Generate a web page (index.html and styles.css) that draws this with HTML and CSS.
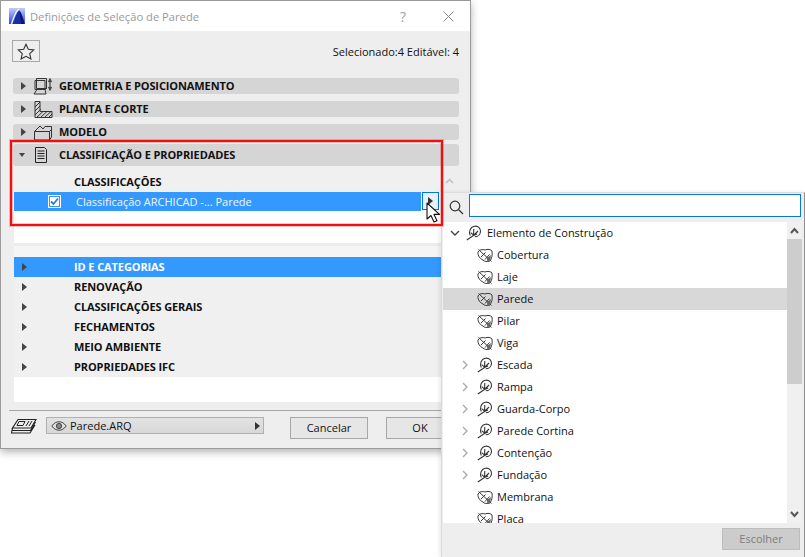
FILE: index.html
```html
<!DOCTYPE html>
<html lang="pt">
<head>
<meta charset="utf-8">
<title>Definições de Seleção de Parede</title>
<link rel="stylesheet" href="styles.css">
</head>
<body>
<svg class="defs" width="0" height="0" aria-hidden="true">
  <defs>
    <linearGradient id="logo-grad" x1="0" y1="0" x2="0" y2="1"><stop offset="0" stop-color="#c4ccf8"/><stop offset="1" stop-color="#2a48e0"/></linearGradient>
    <symbol id="leaf" viewBox="0 0 16 14">
      <path d="M1 4C2 1.500 6 1 8 2c2.500-1.200 6-.5 7 1 .5 4 0 7-2 10-3 1-6 .5-7-1C3.500 11 .5 8 1 4Z" fill="none" stroke="#3a3a3a" stroke-width="1"/>
      <path d="M1.500 1.500 14.500 13.500M4 9 8.500 4.500M8 11.500 12.500 6.500" fill="none" stroke="#3a3a3a" stroke-width="1"/>
      <path d="M10 10l4-3-.8 5.500-3 .7Z" fill="#666"/>
    </symbol>
    <symbol id="branch" viewBox="0 0 16 16">
      <path d="M4.300 10.500C2.500 7 4 2 8.500 1.200c3.800-.4 6.300 2.400 6 5.600-.3 3-2.800 5-5.700 5" fill="none" stroke="#333" stroke-width="1.100"/>
      <path d="M.8 15 7.500 10.500 11 9M7.500 10.500 7.800 4M4.600 7.600l3 2.400M7.500 10.500l4.500-4.500" fill="none" stroke="#333" stroke-width="1.100"/>
    </symbol>
  </defs>
</svg>

<section class="dialog">
  <header class="titlebar">
    <svg class="logo" width="17" height="16" viewBox="0 0 17 16"><rect width="16" height="16" fill="url(#logo-grad)"/><path d="M4 16C6 9 8 4 10 2.500c2 1.500 4 7 5.500 13.500Z" fill="#1a2ea8"/><path d="M12 16C11.500 10 11 6 10 2.500c2 1.500 4 7 5.500 13.500Z" fill="#0b1670"/><path d="M2.500 16C5 8 7 2.500 10 1" fill="none" stroke="#fff" stroke-width="1.200"/></svg>
    <span class="title">Definições de Seleção de Parede</span>
    <span class="help">?</span>
    <svg class="close" width="11" height="11" viewBox="0 0 11 11"><path d="M.5.5l10 10M10.500.5l-10 10" stroke="#8a8a8a" fill="none"/></svg>
  </header>

  <div class="toolbar">
    <button class="star-btn" type="button"><svg width="18" height="17" viewBox="0 0 18 17"><path d="M9 1.200l2.300 5.100 5.500.6-4.100 3.700 1.200 5.400L9 13.300 4.100 16l1.200-5.400L1.200 6.900l5.500-.6Z" fill="none" stroke="#333" stroke-width="1.100"/></svg></button>
    <span class="count">Selecionado:4 Editável: 4</span>
  </div>

  <div class="panels">
    <div class="panel-head">
      <span class="tri-right"></span>
      <svg class="panel-icon" width="28" height="18" viewBox="0 0 28 18"><path d="M3.500 1.500h10v10h-10ZM2 3.500h10v9H2ZM12 12.500l1.500-1M4 12.500l-3 4.500h12l-1-4.500" fill="none" stroke="#333"/><path d="M17 4v7M15.500 5l1.500-3 1.500 3M15.500 10l1.500 3 1.500-3" fill="none" stroke="#333" stroke-width="1.100"/></svg>
      <span class="panel-label">GEOMETRIA E POSICIONAMENTO</span>
    </div>
    <div class="panel-head">
      <span class="tri-right"></span>
      <svg class="panel-icon" width="28" height="18" viewBox="0 0 28 18"><path d="M2 1.500h5v10h12M2 1.500V17.500H19v-6" fill="none" stroke="#333"/><path d="M2 7l5-5M2 11l5-5M2 15l6-6M4 17l6-5.500M8 17l6-5.500M12 17l6-5.500M16 17l3-3" stroke="#333" fill="none"/></svg>
      <span class="panel-label">PLANTA E CORTE</span>
    </div>
    <div class="panel-head">
      <span class="tri-right"></span>
      <svg class="panel-icon" width="28" height="18" viewBox="0 0 28 18"><path d="M1.500 8.500v8.500h15V8.500ZM1.500 8.500 7 3l3 3 2-2.500h6.500V14l-2 3M16.500 8.500l2-2" fill="none" stroke="#333"/></svg>
      <span class="panel-label">MODELO</span>
    </div>
    <div class="panel-head open">
      <span class="tri-down"></span>
      <svg class="panel-icon" width="28" height="18" viewBox="0 0 28 18"><path d="M5.500 1.500h9l2 2v13h-11Z" fill="none" stroke="#222"/><path d="M7.500 5h7M7.500 7.500h7M7.500 10h7M7.500 12.500h7" stroke="#222" fill="none"/></svg>
      <span class="panel-label">CLASSIFICAÇÃO E PROPRIEDADES</span>
    </div>
  </div>

  <div class="content">
    <div class="class-head"><span class="bold-label">CLASSIFICAÇÕES</span><svg class="chev-up" width="9" height="6" viewBox="0 0 9 6"><path d="M1 5l3.500-3.500L8 5" fill="none" stroke="#c8c8c8" stroke-width="1.800"/></svg></div>
    <div class="class-row-wrap">
      <div class="class-row">
        <svg class="check" width="13" height="13" viewBox="0 0 13 13"><rect x=".5" y=".5" width="12" height="12" fill="#fff" stroke="#fff"/><rect x="1.500" y="1.500" width="10" height="10" fill="#fff" stroke="#3399ff"/><path d="M3 6.500l2.500 2.500L10 3.500" fill="none" stroke="#3a78c8" stroke-width="1.800"/></svg>
        <span class="class-text">Classificação ARCHICAD -... Parede</span>
      </div>
      <button class="row-arrow" type="button"><span class="tri-right dark"></span></button>
    </div>
    <div class="white-gap"></div>
    <div class="band"></div>
    <ul class="attr-list">
      <li class="attr selected"><span class="tri-right"></span><span class="bold-label">ID E CATEGORIAS</span></li>
      <li class="attr"><span class="tri-right"></span><span class="bold-label">RENOVAÇÃO</span></li>
      <li class="attr"><span class="tri-right"></span><span class="bold-label">CLASSIFICAÇÕES GERAIS</span></li>
      <li class="attr"><span class="tri-right"></span><span class="bold-label">FECHAMENTOS</span></li>
      <li class="attr"><span class="tri-right"></span><span class="bold-label">MEIO AMBIENTE</span></li>
      <li class="attr"><span class="tri-right"></span><span class="bold-label">PROPRIEDADES IFC</span></li>
    </ul>
    <div class="white-end"></div>
  </div>

  <footer class="footer">
    <svg class="layers" width="26" height="17" viewBox="0 0 26 17"><path d="M7 1.500h18l-5 8.500H1.500Z" fill="none" stroke="#222" stroke-width="1.100"/><path d="M1.500 10l-.5 2.500h18.500l5-8.500M1 12.500l-.5 2.500h18.500l5-8" fill="none" stroke="#222" stroke-width="1.100"/><path d="M8 3.500h6l-2 4H6ZM15 8l3-5M18 8l3-5" fill="none" stroke="#222"/></svg>
    <div class="layer-select">
      <svg class="eye" width="16" height="10" viewBox="0 0 16 10"><path d="M.8 5C3 1.800 5.500.8 8 .8S13 1.800 15.200 5C13 8.200 10.500 9.200 8 9.200S3 8.200.8 5Z" fill="none" stroke="#444"/><circle cx="8" cy="5" r="2.600" fill="#888" stroke="#444"/></svg>
      <span class="layer-name">Parede.ARQ</span>
      <span class="tri-right dark small"></span>
    </div>
    <button class="btn cancel" type="button"><span class="btn-text">Cancelar</span></button>
    <button class="btn ok" type="button"><span class="btn-text">OK</span></button>
  </footer>
</section>

<aside class="popup">
  <div class="search">
    <svg class="lens" width="15" height="15" viewBox="0 0 15 15"><circle cx="6" cy="6" r="4.800" fill="none" stroke="#333" stroke-width="1.200"/><path d="M9.500 9.500l4.500 4.500" stroke="#333" stroke-width="1.300"/></svg>
    <div class="search-box"></div>
  </div>
  <div class="tree-wrap">
    <ul class="tree">
      <li class="node root"><svg class="chev" width="10" height="6" viewBox="0 0 10 6"><path d="M1 1l4 4 4-4" fill="none" stroke="#444" stroke-width="1.400"/></svg><svg class="ic" width="16" height="16"><use href="#branch"/></svg><span>Elemento de Construção</span></li>
      <li class="node leaf"><svg class="ic" width="16" height="14"><use href="#leaf"/></svg><span>Cobertura</span></li>
      <li class="node leaf"><svg class="ic" width="16" height="14"><use href="#leaf"/></svg><span>Laje</span></li>
      <li class="node leaf current"><svg class="ic" width="16" height="14"><use href="#leaf"/></svg><span>Parede</span></li>
      <li class="node leaf"><svg class="ic" width="16" height="14"><use href="#leaf"/></svg><span>Pilar</span></li>
      <li class="node leaf"><svg class="ic" width="16" height="14"><use href="#leaf"/></svg><span>Viga</span></li>
      <li class="node group"><svg class="chev" width="6" height="10" viewBox="0 0 6 10"><path d="M1 1l4 4-4 4" fill="none" stroke="#aaa" stroke-width="1.400"/></svg><svg class="ic" width="16" height="16"><use href="#branch"/></svg><span>Escada</span></li>
      <li class="node group"><svg class="chev" width="6" height="10" viewBox="0 0 6 10"><path d="M1 1l4 4-4 4" fill="none" stroke="#aaa" stroke-width="1.400"/></svg><svg class="ic" width="16" height="16"><use href="#branch"/></svg><span>Rampa</span></li>
      <li class="node group"><svg class="chev" width="6" height="10" viewBox="0 0 6 10"><path d="M1 1l4 4-4 4" fill="none" stroke="#aaa" stroke-width="1.400"/></svg><svg class="ic" width="16" height="16"><use href="#branch"/></svg><span>Guarda-Corpo</span></li>
      <li class="node group"><svg class="chev" width="6" height="10" viewBox="0 0 6 10"><path d="M1 1l4 4-4 4" fill="none" stroke="#aaa" stroke-width="1.400"/></svg><svg class="ic" width="16" height="16"><use href="#branch"/></svg><span>Parede Cortina</span></li>
      <li class="node group"><svg class="chev" width="6" height="10" viewBox="0 0 6 10"><path d="M1 1l4 4-4 4" fill="none" stroke="#aaa" stroke-width="1.400"/></svg><svg class="ic" width="16" height="16"><use href="#branch"/></svg><span>Contenção</span></li>
      <li class="node group"><svg class="chev" width="6" height="10" viewBox="0 0 6 10"><path d="M1 1l4 4-4 4" fill="none" stroke="#aaa" stroke-width="1.400"/></svg><svg class="ic" width="16" height="16"><use href="#branch"/></svg><span>Fundação</span></li>
      <li class="node leaf"><svg class="ic" width="16" height="14"><use href="#leaf"/></svg><span>Membrana</span></li>
      <li class="node leaf"><svg class="ic" width="16" height="14"><use href="#leaf"/></svg><span>Placa</span></li>
    </ul>
    <div class="scrollbar">
      <svg class="sb-arrow" width="9" height="7" viewBox="0 0 9 7"><path d="M1 6l3.500-4L8 6" fill="none" stroke="#555" stroke-width="2"/></svg>
      <div class="sb-track"><div class="sb-thumb"></div></div>
      <svg class="sb-arrow" width="9" height="7" viewBox="0 0 9 7"><path d="M1 1l3.500 4L8 1" fill="none" stroke="#555" stroke-width="2"/></svg>
    </div>
  </div>
  <div class="popup-foot"><button class="choose" type="button" disabled><span class="btn-text">Escolher</span></button></div>
</aside>

<div class="highlight"></div>
<svg class="cursor" width="15" height="22" viewBox="0 0 15 22"><path d="M1 1v16l4-3.500 3 6.500 3-1.300-3-6.300h5.500Z" fill="#fff" stroke="#111" stroke-width="1.100" stroke-linejoin="round"/></svg>
</body>
</html>
```
FILE: styles.css
```css
* { box-sizing: border-box; }
html, body { margin: 0; padding: 0; }
body {
  width: 805px;
  height: 557px;
  overflow: hidden;
  position: relative;
  background: #fff;
  font-family: "Open Sans", "Noto Sans", sans-serif;
  font-size: 11px;
  color: #111;
}
.defs { position: absolute; }
ul { list-style: none; margin: 0; padding: 0; }
button { font-family: inherit; margin: 0; padding: 0; }
.btn-text { display: block; margin-bottom: 2px; }

.dialog {
  position: absolute;
  left: 0;
  top: 0;
  width: 471px;
  height: 449px;
  background: #eeeeee;
  border: 1px solid #9a9a9a;
  box-shadow: 0 3px 8px rgba(0, 0, 0, .3);
}
.titlebar {
  height: 30px;
  background: #fff;
  display: flex;
  align-items: center;
  padding-left: 8px;
}
.logo { margin-right: 4px; flex: none; }
.title { font-size: 11.2px; color: #9a9a9a; width: 369px; }
.help { font-size: 14px; color: #a0a0a0; width: 44px; padding-left: 1px; }
.close { display: block; flex: none; }

.toolbar {
  height: 22px;
  margin: 9px 11px 0 11px;
  display: flex;
  align-items: center;
  justify-content: space-between;
}
.star-btn {
  width: 28px;
  height: 22px;
  background: #eee;
  border: 1px solid #a8a8a8;
  display: flex;
  align-items: center;
  justify-content: center;
}
.count { font-size: 11px; color: #111; }

.panels {
  margin: 16px 11px 0 12px;
  display: flex;
  flex-direction: column;
  gap: 7px;
}
.panel-head {
  height: 16px;
  background: #d5d5d5;
  border-radius: 3px;
  display: flex;
  align-items: center;
  padding-left: 8px;
}
.panel-head.open {
  height: 22px;
  margin-top: -3px;
  padding-left: 6px;
}
.panel-icon { flex: none; }
.tri-right + .panel-icon { margin-left: 7px; }
.tri-down + .panel-icon { margin-left: 5px; }
.panel-label {
  font-weight: 700;
  font-size: 11px;
  letter-spacing: -.1px;
  margin: 0 0 2px -2px;
  color: #111;
}
.open .panel-label { margin-left: 1px; }
.tri-right {
  width: 0;
  height: 0;
  flex: none;
  border-left: 5px solid #444;
  border-top: 4.5px solid transparent;
  border-bottom: 4.5px solid transparent;
}
.tri-down {
  width: 0;
  height: 0;
  flex: none;
  border-top: 4px solid #444;
  border-left: 3.5px solid transparent;
  border-right: 3.5px solid transparent;
}
.tri-right.dark { border-left-color: #333; }

.content {
  margin: 0 0 0 13px;
  width: 427px;
}
.class-head {
  height: 26px;
  display: flex;
  align-items: center;
  padding: 4px 0 0 60px;
  justify-content: space-between;
  background: #f0f0f0;
}
.chev-up { margin-right: -13px; }
.bold-label { font-weight: 700; font-size: 11px; letter-spacing: -.1px; }
.class-row-wrap {
  display: flex;
  background: #fff;
  height: 19px;
}
.class-row {
  width: 407px;
  height: 19px;
  background: #3399ff;
  display: flex;
  align-items: center;
  padding-left: 34px;
  color: #f2f6fb;
}
.class-text { margin-left: 15px; }
.row-arrow {
  width: 17px;
  height: 18px;
  margin-left: 1px;
  background: #e5f1fb;
  border: 1px solid #0078d7;
  display: flex;
  align-items: center;
  justify-content: center;
}
.white-gap { height: 32px; background: #fff; }
.band { height: 14px; background: linear-gradient(#ececec 0 3px, #f5f5f5 3px); }
.attr {
  height: 20px;
  display: flex;
  align-items: center;
  padding-left: 8px;
  background: #f0f0f0;
}
.attr .bold-label { margin: 0 0 2px 47px; }
.attr.selected { background: #3399ff; }
.attr.selected .bold-label { color: #fff; }
.white-end { height: 25px; background: #fff; }

.footer {
  margin: 8px 0 0 8px;
  border-top: 1px solid #a6a6a6;
  padding: 6px 0 0 2px;
  display: flex;
  align-items: flex-start;
}
.layers { margin-top: 1px; flex: none; }
.layer-select {
  width: 218px;
  height: 17px;
  margin-left: 9px;
  background: linear-gradient(#e2e2e2, #d8d8d8);
  border: 1px solid #b0b0b0;
  display: flex;
  align-items: center;
  padding-left: 4px;
}
.layer-name { margin-left: 3px; flex: 1; }
.tri-right.small { margin-right: 3px; border-left-width: 5px; }
.btn {
  height: 22px;
  background: #e6e6e6;
  border: 1px solid #a8a8a8;
  font-size: 11px;
  color: #111;
}
.cancel { width: 78px; margin-left: 26px; }
.ok { width: 68px; margin-left: 18px; }

.popup {
  position: absolute;
  left: 441px;
  top: 192px;
  width: 364px;
  height: 365px;
  background: #eeeeee;
  border-top: 1px solid #dcdcdc;
  border-left: 1px solid #dcdcdc;
  border-right: 1px solid #8f8f8f;
  box-shadow: -2px 0 4px rgba(0, 0, 0, .08);
  display: flex;
  flex-direction: column;
}
.search {
  height: 29px;
  display: flex;
  align-items: center;
  flex: none;
  padding-left: 7px;
}
.search-box {
  width: 332px;
  height: 23px;
  margin-left: 5px;
  background: #fff;
  border: 1px solid #0a78d0;
  margin-top: -4px;
}
.tree-wrap {
  height: 301px;
  display: flex;
  flex: none;
  margin-left: 1px;
}
.tree {
  width: 344px;
  height: 301px;
  overflow: hidden;
  background: #fff;
}
.node {
  height: 22px;
  display: flex;
  align-items: center;
  font-size: 11px;
  flex: none;
}
.node span { color: #111; margin-bottom: 2px; }
.node .ic { flex: none; display: block; }
.root { padding-left: 7px; }
.root .ic { margin-left: 6px; }
.root span { margin-left: 5px; }
.leaf { padding-left: 34px; }
.leaf span { margin-left: 4px; }
.group { padding-left: 19px; }
.group .ic { margin-left: 9px; }
.group span { margin-left: 4px; }
.current { background: #d8d8d8; width: 344px; }

.scrollbar {
  width: 15px;
  display: flex;
  flex-direction: column;
  align-items: center;
  background: #f0f0f0;
}
.sb-arrow { flex: none; margin: 5px 0; }
.sb-track { flex: 1; width: 100%; }
.sb-thumb { height: 145px; background: #cdcdcd; }

.popup-foot {
  flex: 1;
  display: flex;
  justify-content: flex-end;
  align-items: flex-start;
  padding: 5px 4px 0 0;
}
.choose {
  width: 78px;
  height: 22px;
  background: #cccccc;
  border: 1px solid #bdbdbd;
  color: #7d7d7d;
  font-size: 11px;
}

.highlight {
  position: absolute;
  left: 10px;
  top: 140px;
  width: 433px;
  height: 86px;
  border: 2px solid #f01010;
  box-shadow: 0 0 0 1px rgba(240, 16, 16, .25), inset 0 0 0 1px rgba(240, 16, 16, .25);
}
.cursor {
  position: absolute;
  left: 426px;
  top: 202px;
}
```
